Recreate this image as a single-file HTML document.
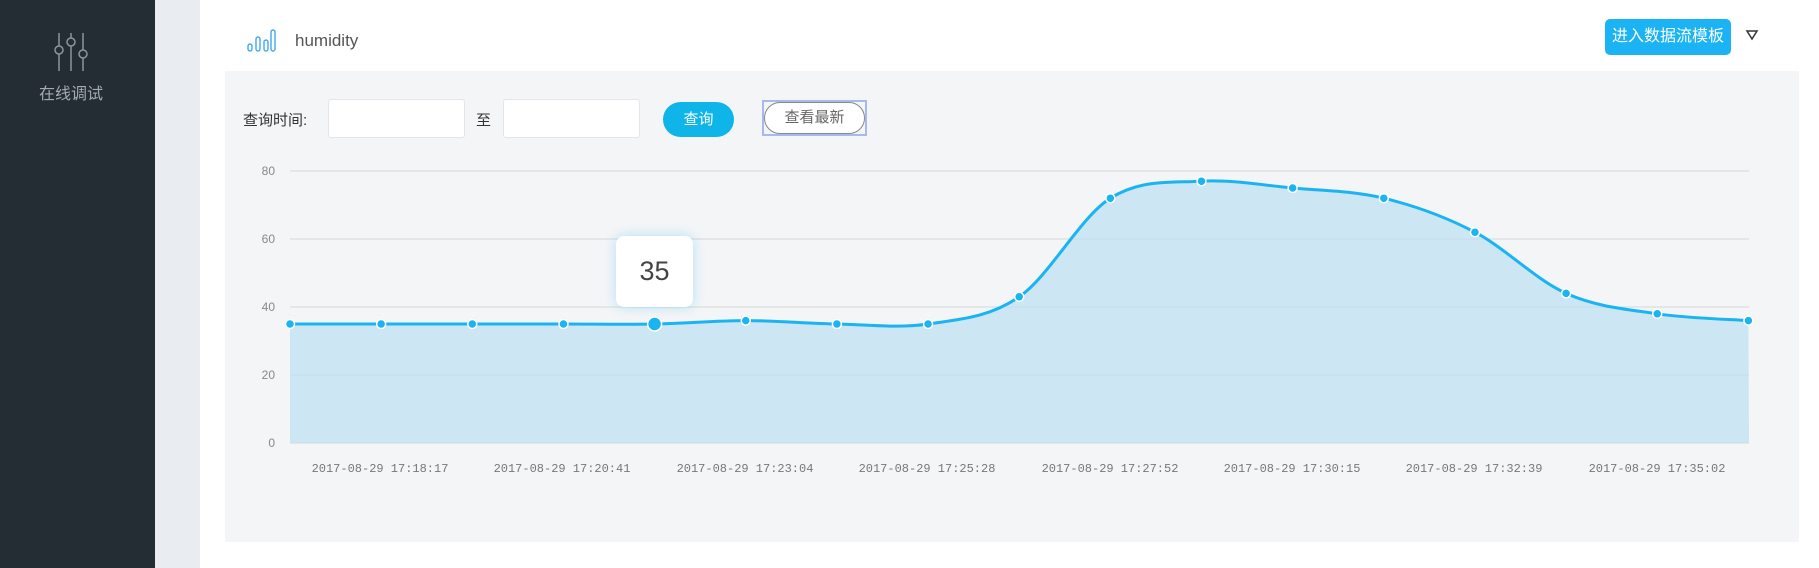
<!DOCTYPE html>
<html><head><meta charset="utf-8"><style>
*{margin:0;padding:0;box-sizing:border-box}
body{width:1819px;height:568px;background:#fff;position:relative;overflow:hidden;font-family:"Liberation Sans","Noto Sans CJK SC",sans-serif}
.abs{position:absolute}
</style></head><body>
<div class="abs" style="left:0;top:0;width:155px;height:568px;background:#232d33"></div>
<div class="abs" style="left:155px;top:0;width:45px;height:568px;background:#e9edf1"></div>
<svg class="abs" style="left:50px;top:30px" width="44" height="44" viewBox="0 0 44 44" fill="none" stroke="#8d969b" stroke-width="1.5">
<line x1="9" y1="3" x2="9" y2="16"/><circle cx="9" cy="20" r="4"/><line x1="9" y1="24" x2="9" y2="41"/>
<line x1="21" y1="3" x2="21" y2="8"/><circle cx="21" cy="12" r="4"/><line x1="21" y1="16" x2="21" y2="41"/>
<line x1="33" y1="3" x2="33" y2="20"/><circle cx="33" cy="24" r="4"/><line x1="33" y1="28" x2="33" y2="41"/>
</svg>
<div class="abs" style="left:30px;top:80px;width:82px;text-align:center;color:#a4abaf;font-size:16px">在线调试</div>

<svg class="abs" style="left:247px;top:27px" width="30" height="26" viewBox="0 0 30 26" fill="none" stroke="#41a9ee" stroke-width="1.4">
<rect x="1" y="17" width="4" height="7" rx="2"/><rect x="9" y="10" width="4" height="14" rx="2"/><rect x="17" y="13" width="4" height="11" rx="2"/><rect x="24" y="3" width="4" height="21" rx="2"/>
</svg>
<div class="abs" style="left:295px;top:31px;font-size:17px;color:#555">humidity</div>
<div class="abs" style="left:1605px;top:19px;width:126px;height:36px;background:#1bb3f4;border-radius:5px;color:#fff;font-size:16px;line-height:36px;text-align:center">进入数据流模板</div>
<svg class="abs" style="left:1745px;top:29px" width="14" height="12" viewBox="0 0 14 12"><path d="M2 2 L12 2 L7 10 Z" fill="none" stroke="#333" stroke-width="1.5"/></svg>

<div class="abs" style="left:225px;top:71px;width:1574px;height:471px;background:#f4f5f7"></div>
<div class="abs" style="left:243px;top:109px;font-size:15px;color:#333">查询时间:</div>
<div class="abs" style="left:328px;top:99px;width:137px;height:39px;background:#fff;border:1px solid #e3e5e8;border-radius:3px"></div>
<div class="abs" style="left:476px;top:109px;font-size:15px;color:#333">至</div>
<div class="abs" style="left:503px;top:99px;width:137px;height:39px;background:#fff;border:1px solid #e3e5e8;border-radius:3px"></div>
<div class="abs" style="left:663px;top:102px;width:71px;height:35px;background:#0fb5e9;border-radius:18px;color:#fff;font-size:15px;line-height:35px;text-align:center">查询</div>
<div class="abs" style="left:762px;top:100px;width:105px;height:36px;border:2px solid #a9b9ee"></div>
<div class="abs" style="left:764px;top:102px;width:101px;height:32px;background:#fff;border:1px solid #888;border-radius:16px;color:#666;font-size:15px;line-height:30px;text-align:center">查看最新</div>

<svg class="abs" style="left:0;top:0" width="1819" height="568" font-family="Liberation Sans,sans-serif">
<g stroke="#dfe1e4" stroke-width="1.5">
<line x1="290" y1="171" x2="1749" y2="171"/><line x1="290" y1="239" x2="1749" y2="239"/><line x1="290" y1="307" x2="1749" y2="307"/><line x1="290" y1="375" x2="1749" y2="375"/><line x1="290" y1="443" x2="1749" y2="443"/>
</g>
<g fill="#888" font-size="12" text-anchor="end">
<text x="275" y="175">80</text><text x="275" y="243">60</text><text x="275" y="311">40</text><text x="275" y="379">20</text><text x="275" y="447">0</text>
</g>
<path id="area" fill="#bfe0f2" fill-opacity="0.75" d=""/>
<path id="line" fill="none" stroke="#1ab4f2" stroke-width="3" d=""/>
<g id="dots"></g>
<g fill="#777" font-size="12" font-family="Liberation Mono,monospace" text-anchor="middle">
<text x="380" y="472">2017-08-29 17:18:17</text><text x="562" y="472">2017-08-29 17:20:41</text><text x="745" y="472">2017-08-29 17:23:04</text><text x="927" y="472">2017-08-29 17:25:28</text><text x="1110" y="472">2017-08-29 17:27:52</text><text x="1292" y="472">2017-08-29 17:30:15</text><text x="1474" y="472">2017-08-29 17:32:39</text><text x="1657" y="472">2017-08-29 17:35:02</text>
</g>
</svg>
<div class="abs" style="left:616px;top:236px;width:77px;height:71px;background:#fff;border-radius:8px;box-shadow:0 0 12px rgba(27,180,242,0.3);font-size:27px;color:#444;text-align:center;line-height:71px">35</div>
<script>
var v=[35,35,35,35,35,36,35,35,43,72,77,75,72,62,44,38,36];
var p=v.map(function(y,i){return [290+i*91.15,443-3.4*y]});
var d="M"+p[0][0]+" "+p[0][1];
for(var i=0;i<p.length-1;i++){
 var p0=p[i-1]||p[i],p1=p[i],p2=p[i+1],p3=p[i+2]||p2,t=6;
 d+=" C"+(p1[0]+(p2[0]-p0[0])/t)+" "+(p1[1]+(p2[1]-p0[1])/t)+" "+(p2[0]-(p3[0]-p1[0])/t)+" "+(p2[1]-(p3[1]-p1[1])/t)+" "+p2[0]+" "+p2[1];
}
document.getElementById('line').setAttribute('d',d);
document.getElementById('area').setAttribute('d',d+" L1749 443 L290 443 Z");
var g="";p.forEach(function(q,i){g+='<circle cx="'+q[0]+'" cy="'+q[1]+'" r="'+(i==4?7:4.5)+'" fill="#1ab4f2" stroke="#fff" stroke-width="1.5"/>';});
document.getElementById('dots').innerHTML=g;
</script>
</body></html>
